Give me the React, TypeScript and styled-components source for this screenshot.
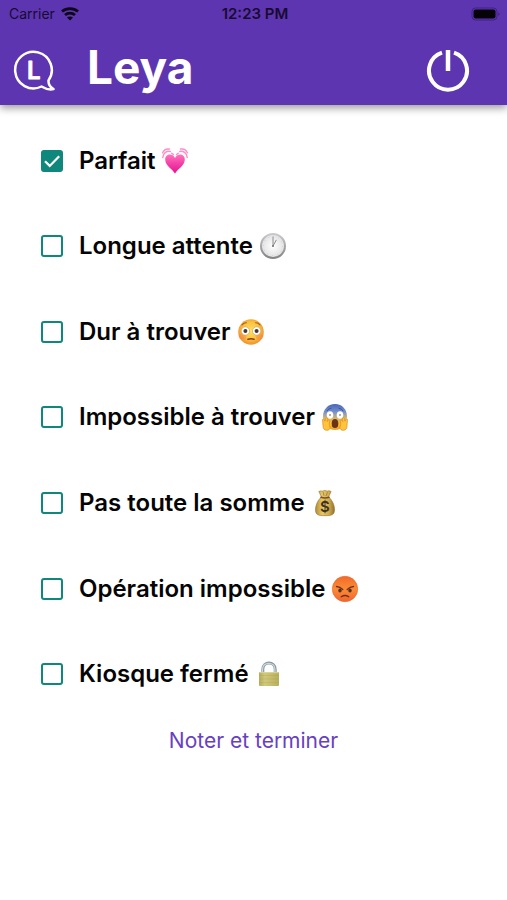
import React, { useState } from "react";
import styled, { createGlobalStyle } from "styled-components";

const GlobalStyle = createGlobalStyle`
  *, *::before, *::after { box-sizing: border-box; }
  body {
    margin: 0;
    background: #fff;
    color: #050505;
    font-family: Inter, "Liberation Sans", sans-serif;
  }
`;

const Screen = styled.div`
  min-height: 100vh;
  display: flex;
  flex-direction: column;
`;

const Header = styled.header`
  background: #5e35b1;
  box-shadow: 0 3px 8px rgba(0, 0, 0, 0.4);
`;

const StatusBar = styled.div`
  display: grid;
  grid-template-columns: 1fr auto 1fr;
  align-items: center;
  height: 28px;
  padding: 0 6px 0 9px;
  font-size: 14px;
  line-height: 20px;
  color: #170b30;
`;

const Carrier = styled.div`
  display: flex;
  align-items: center;
  gap: 6px;
`;

const Clock = styled.time`
  font-size: 15px;
  font-weight: 600;
`;

const BatterySlot = styled.div`
  display: flex;
  justify-content: flex-end;
`;

const TitleBar = styled.div`
  display: flex;
  align-items: center;
  padding: 12px 36px 8px 12px;
`;

const Title = styled.h1`
  flex: 1;
  margin: 0 0 2px 31px;
  font-size: 46px;
  line-height: 55px;
  font-weight: 700;
  color: #fff;
`;

const PowerButton = styled.button`
  display: flex;
  padding: 0;
  margin-top: 4px;
  border: 0;
  background: none;
  cursor: pointer;
`;

const LogoSlot = styled.div`
  display: flex;
  margin-top: 4px;
`;

const Form = styled.form`
  display: flex;
  flex-direction: column;
  align-items: center;
  padding-top: 13px;
`;

const Options = styled.div`
  display: grid;
  grid-auto-rows: 1fr;
  min-height: 599px;
  width: 100%;
  padding: 0 40px;
`;

const Option = styled.label`
  display: flex;
  align-items: center;
  font-size: 24px;
  line-height: 32px;
  font-weight: 600;
  cursor: pointer;
`;

const OptionText = styled.span`
  margin: 0 6px 0 15px;
`;

const BoxSlot = styled.span`
  display: grid;
  place-items: center;
  width: 24px;
  height: 24px;

  > * { grid-area: 1 / 1; }
  > svg { pointer-events: none; }
`;

const Box = styled.input`
  appearance: none;
  width: 22px;
  height: 22px;
  margin: 0;
  border: 2px solid #0f877c;
  border-radius: 3px;
  background: #fff;
  cursor: pointer;

  &:checked { background: #0f877c; }
`;

const Submit = styled.button`
  padding: 8px 12px;
  border: 0;
  background: none;
  font-family: inherit;
  font-size: 21px;
  line-height: 32px;
  color: #6740c4;
  cursor: pointer;
`;

const Wifi = () => (
  <svg width="18" height="14" viewBox="0 0 18 14" fill="none" stroke="#0c0618" strokeWidth="2.7" aria-hidden="true">
    <path d="M1 4.6C5.4.7 12.6.7 17 4.6" />
    <path d="M4 8c2.8-2.5 7.2-2.5 10 0" />
    <path d="M9 13.6 6 10.5c1.6-1.4 4.4-1.4 6 0z" fill="#0c0618" stroke="none" />
  </svg>
);

const Battery = () => (
  <svg width="30" height="14" viewBox="0 0 30 14" aria-hidden="true">
    <rect x="1" y="1" width="25" height="12" rx="3.5" fill="none" stroke="#3e2380" />
    <rect x="2.5" y="2.5" width="22" height="9" rx="2" fill="#050208" />
    <path d="M27.5 5.2q2 1.8 0 3.6z" fill="#2f1a63" />
  </svg>
);

const Logo = () => (
  <svg width="44" height="44" viewBox="0 0 44 44" role="img" aria-label="Leya">
    <path
      d="M36.5 31.5A18.3 18.3 0 1 0 29.5 37.5C33.5 39.9 37.5 41 41.5 40.1C38.2 38.2 36.3 35 36.5 31.5Z"
      fill="none" stroke="#fff" strokeWidth="2.5" strokeLinejoin="round"
    />
    <text x="15" y="30" fontSize="24" fontWeight="600" fontFamily="Inter, sans-serif" fill="#fff" stroke="#fff" strokeWidth=".8" strokeLinejoin="round">L</text>
  </svg>
);

const Power = () => (
  <svg width="46" height="46" viewBox="0 0 46 46" fill="none" stroke="#fff" strokeWidth="4" aria-hidden="true">
    <path d="M17 4.7A19 19 0 1 0 29 4.7" />
    <path d="M23 2v21" strokeWidth="4.5" />
  </svg>
);

const Tick = () => (
  <svg width="22" height="22" viewBox="0 0 22 22" fill="none" stroke="#fff" strokeWidth="2.2" aria-hidden="true">
    <path d="m4 11.3 4.7 4.6L18.2 6.2" />
  </svg>
);

const Emoji = ({ label, children }: { label: string; children: React.ReactNode }) => (
  <svg width="28" height="28" viewBox="0 0 28 28" role="img" aria-label={label}>
    {children}
  </svg>
);

const BeatingHeart = () => (
  <Emoji label="cœur battant">
    <defs>
      <linearGradient id="heart" x1="0" y1="0" x2="0" y2="1">
        <stop offset="0" stopColor="#ff75bd" />
        <stop offset=".5" stopColor="#f23ea7" />
        <stop offset="1" stopColor="#e9128e" />
      </linearGradient>
    </defs>
    <path d="M14 26.5C11.5 22 4.2 18.5 4.2 12.4c0-5.8 7.4-6.6 9.8-1.4 2.4-5.2 9.8-4.4 9.8 1.4 0 6.1-7.3 9.6-9.8 14.1z" fill="url(#heart)" />
    <g fill="none" stroke="#ff8fc8" strokeWidth="1.5" strokeLinecap="round">
      <path d="M1.8 10.5C2 6.2 5.5 3.8 9.2 4.5M26.2 10.5c-.2-4.3-3.7-6.7-7.4-6" />
      <path d="M1.6 5.8C2.7 3.3 5.6 1.7 8.4 2.1M26.4 5.8C25.3 3.3 22.4 1.7 19.6 2.1M10.8 6.3l1.7 1.2M17.2 6.3l-1.7 1.2" />
    </g>
  </Emoji>
);

const ClockFace = () => (
  <Emoji label="horloge">
    <defs>
      <linearGradient id="rim" x1="0" y1="0" x2="0" y2="1">
        <stop offset="0" stopColor="#c9c9cb" />
        <stop offset="1" stopColor="#858588" />
      </linearGradient>
      <radialGradient id="dial">
        <stop offset="0" stopColor="#fff" />
        <stop offset="1" stopColor="#e0e0e2" />
      </radialGradient>
    </defs>
    <circle cx="14" cy="14" r="12" fill="url(#dial)" stroke="url(#rim)" strokeWidth="2" />
    <circle cx="14" cy="14" r="9.6" fill="none" stroke="#bbb" strokeWidth=".7" strokeDasharray=".7 4.33" />
    <path d="M14 14V5M14 14l3.2-5.8" stroke="#8c8c90" strokeWidth="1" strokeLinecap="round" />
    <circle cx="14" cy="14" r="1" fill="#777" />
  </Emoji>
);

const Flushed = () => (
  <Emoji label="visage rougissant">
    <defs>
      <radialGradient id="flush" cx=".5" cy=".45">
        <stop offset="0" stopColor="#ffe066" />
        <stop offset=".65" stopColor="#fcc43f" />
        <stop offset="1" stopColor="#f09a35" />
      </radialGradient>
    </defs>
    <circle cx="14" cy="14" r="12.8" fill="url(#flush)" />
    <ellipse cx="5.5" cy="18.5" rx="3.8" ry="3" fill="#f47c45" opacity=".4" />
    <ellipse cx="22.5" cy="18.5" rx="3.8" ry="3" fill="#f47c45" opacity=".4" />
    <circle cx="8.4" cy="13" r="4.2" fill="#fff" stroke="#b88b45" strokeWidth=".5" />
    <circle cx="19.6" cy="13" r="4.2" fill="#fff" stroke="#b88b45" strokeWidth=".5" />
    <circle cx="8.4" cy="13" r="2" fill="#4a3430" />
    <circle cx="19.6" cy="13" r="2" fill="#4a3430" />
    <path d="M5 6.8q2-2.2 4.4-2M23 6.8q-2-2.2-4.4-2" fill="none" stroke="#a55d1e" strokeWidth="1.1" strokeLinecap="round" />
    <path d="M11 21.3q3-1 6 0" fill="none" stroke="#84401c" strokeWidth="1.6" strokeLinecap="round" />
  </Emoji>
);

const Screaming = () => (
  <Emoji label="visage qui hurle de peur">
    <defs>
      <linearGradient id="fear" x1="0" y1="0" x2="0" y2="1">
        <stop offset="0" stopColor="#4864b8" />
        <stop offset=".3" stopColor="#7590cb" />
        <stop offset=".55" stopColor="#d5b66f" />
        <stop offset=".75" stopColor="#fac133" />
        <stop offset="1" stopColor="#f1a126" />
      </linearGradient>
    </defs>
    <path d="M14 1C6.8 1 2 6.5 2 13.5S7 27 14 27s12-6.5 12-13.5S21.2 1 14 1z" fill="url(#fear)" />
    <path d="M6 7.8q1.5-2.3 4-2.6M22 7.8q-1.5-2.3-4-2.6" fill="none" stroke="#41539a" strokeLinecap="round" />
    <ellipse cx="9" cy="12" rx="3.3" ry="3.8" fill="#fff" />
    <ellipse cx="19" cy="12" rx="3.3" ry="3.8" fill="#fff" />
    <circle cx="9" cy="12" r=".8" fill="#555" />
    <circle cx="19" cy="12" r=".8" fill="#555" />
    <ellipse cx="14" cy="20.5" rx="3.3" ry="4.6" fill="#6c3119" />
    <g fill="#ffc33c" stroke="#df8c1d" strokeWidth=".7" strokeLinejoin="round">
      <path d="M1.5 16.5c1.3-1 2 .2 2.400 1.700l.8-2.700c.7-1.700 2.300-.8 1.900.8l-.4 2.200c1.300-2.600 3.500-1.600 2.400.4-.6 1.300-.2 3.600.4 5.300.6 2-1.600 3.100-3.400 3.100-2.500 0-3.700-2.200-3.600-4.600z" />
      <path d="M26.5 16.5c-1.3-1-2 .2-2.400 1.700l-.8-2.700c-.7-1.700-2.300-.8-1.900.8l.4 2.200c-1.300-2.600-3.500-1.600-2.400.4.600 1.300.2 3.600-.4 5.300-.6 2 1.600 3.100 3.400 3.100 2.500 0 3.700-2.200 3.600-4.600z" />
    </g>
  </Emoji>
);

const MoneyBag = () => (
  <Emoji label="sac d'argent">
    <defs>
      <linearGradient id="bag">
        <stop offset="0" stopColor="#b08c3a" />
        <stop offset=".35" stopColor="#e6c866" />
        <stop offset=".7" stopColor="#d2ac4e" />
        <stop offset="1" stopColor="#96702c" />
      </linearGradient>
    </defs>
    <path d="M10.5 8 7.8 2.5c2-1.3 3.500.3 5-.8 1.700-.9 2.500.8 4 .3 1.200-.4 2.100-.1 3.300.6L17.500 8c3.400 2.600 6.200 8 6 13 0 4.800-3 5.700-9.500 5.700S4.500 25.800 4.500 21c0-5 2.600-10.400 6-13z" fill="url(#bag)" stroke="#94702e" strokeWidth=".6" />
    <path d="M10 8.3q4 1.5 8 0" fill="none" stroke="#7c4d25" strokeWidth="1.6" strokeLinecap="round" />
    <path d="M12 2.8l1 4M16.5 3.2 15 7" stroke="#92702e" strokeWidth=".7" />
    <text x="14" y="23" textAnchor="middle" fontSize="15" fontWeight="600" fontFamily="Inter, sans-serif" fill="#3d3521">$</text>
  </Emoji>
);

const Angry = () => (
  <Emoji label="visage en colère">
    <defs>
      <linearGradient id="anger" x1="0" y1="0" x2="0" y2="1">
        <stop offset="0" stopColor="#f36a2b" />
        <stop offset=".5" stopColor="#fa8c36" />
        <stop offset="1" stopColor="#f1642f" />
      </linearGradient>
    </defs>
    <circle cx="14" cy="14" r="12.7" fill="url(#anger)" stroke="#ea6229" strokeWidth=".6" />
    <ellipse cx="9" cy="15.5" rx="1.7" ry="2" fill="#55301e" />
    <ellipse cx="19" cy="15.5" rx="1.7" ry="2" fill="#55301e" />
    <path d="M5.5 11.5q3.5.3 6.3 3M22.5 11.5q-3.5.3-6.3 3" fill="none" stroke="#713019" strokeWidth="1.3" strokeLinecap="round" />
    <path d="M10.3 21.8q3.7-2.6 7.4 0" fill="none" stroke="#713019" strokeWidth="1.4" strokeLinecap="round" />
  </Emoji>
);

const Padlock = () => (
  <Emoji label="cadenas">
    <defs>
      <linearGradient id="lock">
        <stop offset="0" stopColor="#b3ac5c" />
        <stop offset=".3" stopColor="#d0c87b" />
        <stop offset="1" stopColor="#b8af5c" />
      </linearGradient>
    </defs>
    <path d="M7.8 14V9.2c0-8.3 12.4-8.3 12.4 0V14" fill="none" stroke="#8999a3" strokeWidth="3" />
    <path d="M7.5 14V9.2c0-7.9 12.4-7.9 12.4 0V14" fill="none" stroke="#cbd7dd" strokeWidth="1.3" />
    <rect x="4" y="12" width="20" height="14" rx="1" fill="url(#lock)" />
    <path d="M4.5 15.5h19M4.5 19h19M4.5 22.5h19" stroke="#a39a4b" strokeWidth=".4" opacity=".6" />
    <path d="M4.5 12.6h19" stroke="#e1dc99" strokeWidth=".8" />
  </Emoji>
);

const ratings = [
  { id: "parfait", text: "Parfait", Icon: BeatingHeart },
  { id: "attente", text: "Longue attente", Icon: ClockFace },
  { id: "dur", text: "Dur à trouver", Icon: Flushed },
  { id: "introuvable", text: "Impossible à trouver", Icon: Screaming },
  { id: "somme", text: "Pas toute la somme", Icon: MoneyBag },
  { id: "operation", text: "Opération impossible", Icon: Angry },
  { id: "ferme", text: "Kiosque fermé", Icon: Padlock },
];

export default function App() {
  const [selected, setSelected] = useState<string[]>(["parfait"]);
  const toggle = (id: string) =>
    setSelected((ids) => (ids.includes(id) ? ids.filter((i) => i !== id) : [...ids, id]));

  return (
    <Screen>
      <GlobalStyle />
      <Header>
        <StatusBar>
          <Carrier>
            Carrier
            <Wifi />
          </Carrier>
          <Clock>12:23 PM</Clock>
          <BatterySlot>
            <Battery />
          </BatterySlot>
        </StatusBar>
        <TitleBar>
          <LogoSlot>
            <Logo />
          </LogoSlot>
          <Title>Leya</Title>
          <PowerButton type="button" aria-label="Déconnexion">
            <Power />
          </PowerButton>
        </TitleBar>
      </Header>
      <Form onSubmit={(event) => event.preventDefault()}>
        <Options>
          {ratings.map(({ id, text, Icon }) => (
            <Option key={id} htmlFor={id}>
              <BoxSlot>
                <Box id={id} type="checkbox" checked={selected.includes(id)} onChange={() => toggle(id)} />
                {selected.includes(id) && <Tick />}
              </BoxSlot>
              <OptionText>{text}</OptionText>
              <Icon />
            </Option>
          ))}
        </Options>
        <Submit type="submit">Noter et terminer</Submit>
      </Form>
    </Screen>
  );
}
